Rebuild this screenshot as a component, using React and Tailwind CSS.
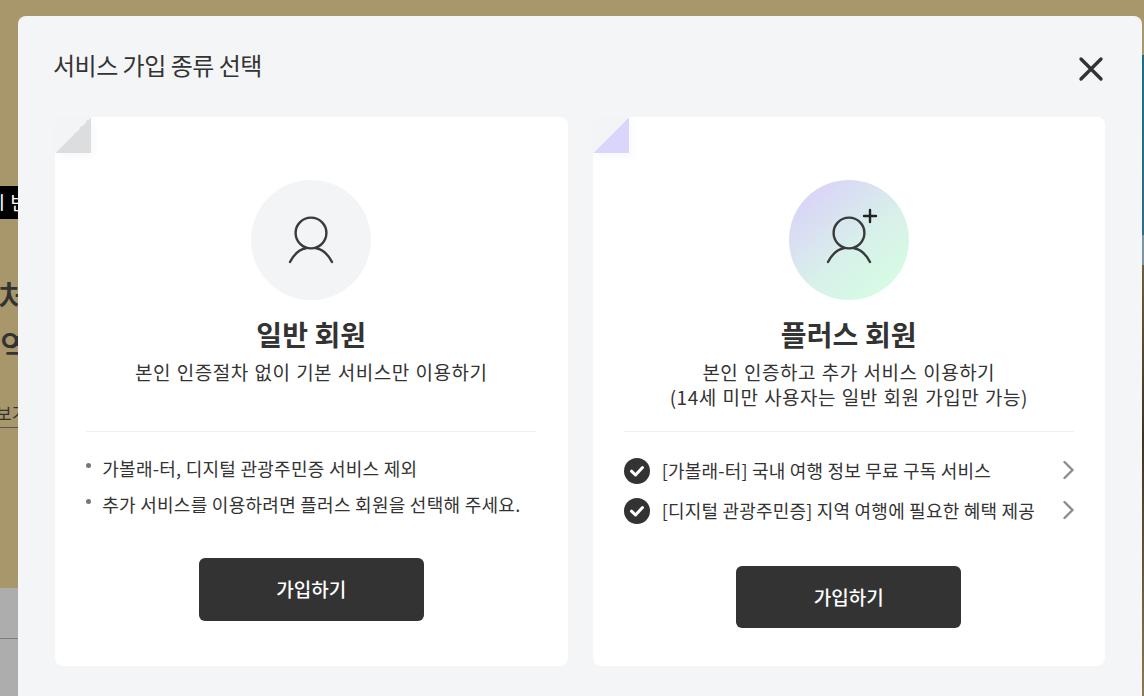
const font = { fontFamily: '"Noto Sans CJK KR", "Noto Sans", sans-serif' };

const UserIcon = ({ plus }) => (
  <svg width="60" height="56" viewBox="0 -8 60 56" fill="none" stroke="#3a3a3a" strokeWidth="2.4" strokeLinecap="round" className="mb-[8px] ml-[12px]">
    <circle cx="24" cy="17" r="15.4" />
    <path d="M3 46C7 38.5 12 33 19 32.2" />
    <path d="M45 46C41 38.5 36 33 29 32.2" />
    {plus && <path d="M45 -6V6M39 0H51" stroke="#222" />}
  </svg>
);

const CheckIcon = () => (
  <svg width="26" height="26" viewBox="0 0 26 26" className="shrink-0">
    <circle cx="13" cy="13" r="13" fill="#333" />
    <path d="M7.5 13.2L11.5 17L18.5 9.5" fill="none" stroke="#fff" strokeWidth="3" strokeLinecap="round" strokeLinejoin="round" />
  </svg>
);

const Chevron = () => (
  <svg width="11" height="20" viewBox="0 0 11 20" fill="none" stroke="#8c8c8c" strokeWidth="2.4" strokeLinecap="round" strokeLinejoin="round" className="mb-[2px] shrink-0">
    <path d="M1.5 2L9.5 10L1.5 18" />
  </svg>
);

const Fold = ({ plus }) => (
  <div
    className={`absolute left-0 top-0 h-[36px] w-[36px] shadow-[3px_4px_8px_rgba(0,0,0,0.03)] ${
      plus
        ? "bg-[linear-gradient(135deg,#f3f4f6_50%,#d9d5fb_50%)]"
        : "bg-[linear-gradient(135deg,#f3f4f6_50%,#dcddde_50%)]"
    }`}
  />
);

const Card = ({ plus, title, desc, children, btnClass }) => (
  <div className="relative flex h-[549px] w-[513px] flex-col items-center rounded-lg bg-white pt-[63px]">
    <Fold plus={plus} />
    <div
      className={`flex h-[120px] w-[120px] items-center justify-center rounded-full ${
        plus ? "bg-[linear-gradient(140deg,#dad2f8_10%,#d8f0ea_55%,#d6fbe4_85%)]" : "bg-[#f3f4f6]"
      }`}
    >
      <UserIcon plus={plus} />
    </div>
    <h2 className="mt-[14px] text-[28px] font-bold leading-[40px] tracking-[0.1px] text-[#333]">{title}</h2>
    <div className="mt-[5px] h-[72px] text-center text-[19px] leading-[25px] tracking-[0.5px] text-[#333] [word-spacing:1px]">
      {desc.map((d) => (
        <p key={d}>{d}</p>
      ))}
    </div>
    <div className="h-px w-[450px] bg-[#f0f0f0]" />
    {children}
    <button className={`flex w-[225px] items-center justify-center rounded-md bg-[#333] text-[19px] font-medium text-white ${btnClass}`}>
      가입하기
    </button>
  </div>
);

export default function App() {
  return (
    <div style={font} className="relative flex h-[696px] w-[1144px] overflow-hidden bg-[#a7976b]">
      {/* page behind the modal */}
      <div className="flex h-full w-[18px] flex-col overflow-hidden">
        <div className="mt-[186px] flex h-[33px] w-[60px] shrink-0 items-center bg-black text-[19px] text-white">
          <span className="ml-[-7px] whitespace-nowrap">ㅣ반</span>
        </div>
        <div className="ml-[-2px] mt-[52px] whitespace-nowrap text-[34px] font-medium leading-[50px] text-[#333]">처</div>
        <div className="whitespace-nowrap text-[34px] font-medium leading-[50px] text-[#333]">역</div>
        <div className="ml-[-4px] mt-[30px] w-[60px] whitespace-nowrap border-b border-[#555] pb-[2px] text-[17px] leading-[24px] text-[#333]">보기</div>
        <div className="mt-auto flex h-[108px] shrink-0 flex-col bg-[#adadad]">
          <div className="mt-[50px] h-px bg-[#7d7d7d]" />
        </div>
      </div>
      <div className="ml-auto flex h-full w-[2px] flex-col">
        <div className="h-[55px] bg-[#a7976b]" />
        <div className="h-[180px] bg-[linear-gradient(180deg,#1e6d8c,#2a6f8a)]" />
        <div className="h-[30px] bg-[#7d95a3]" />
        <div className="flex-1 bg-[linear-gradient(180deg,#6b5f3c,#3b3524_40%,#8a7a50)]" />
      </div>

      {/* modal */}
      <div className="absolute left-[18px] top-[16px] h-[700px] w-[1124px] rounded-lg bg-[#f4f5f7] px-[37px]">
        <div className="flex h-[101px] items-start justify-between">
          <h1 className="ml-[-2px] mt-[31px] text-[24px] font-normal leading-[36px] tracking-[-0.5px] text-[#333]">서비스 가입 종류 선택</h1>
          <button className="mt-[39px]">
            <svg width="28" height="28" viewBox="0 0 28 28" fill="none" stroke="#333" strokeWidth="3.4" strokeLinecap="round">
              <path d="M4 4L24 24M24 4L4 24" />
            </svg>
          </button>
        </div>
        <div className="flex gap-[25px]">
          <Card plus={false} title="일반 회원" desc={["본인 인증절차 없이 기본 서비스만 이용하기"]} btnClass="mt-[40px] h-[63px]">
            <ul className="mt-[22px] flex w-[450px] flex-col gap-[8px] text-[18px] leading-[28px] tracking-[0.27px] text-[#333]">
              {["가볼래-터, 디지털 관광주민증 서비스 제외", "추가 서비스를 이용하려면 플러스 회원을 선택해 주세요."].map((t) => (
                <li key={t} className="flex items-center">
                  <span className="mb-[6px] mr-[11px] h-[5px] w-[5px] rounded-full bg-[#777]" />
                  {t}
                </li>
              ))}
            </ul>
          </Card>
          <Card
            plus
            title="플러스 회원"
            desc={["본인 인증하고 추가 서비스 이용하기", "(14세 미만 사용자는 일반 회원 가입만 가능)"]}
            btnClass="mt-[41px] h-[62px]"
          >
            <ul className="mt-[25px] flex w-[450px] flex-col gap-[12px] text-[18px] leading-[26px] tracking-[0.2px] text-[#333]">
              {["[가볼래-터] 국내 여행 정보 무료 구독 서비스", "[디지털 관광주민증] 지역 여행에 필요한 혜택 제공"].map((t) => (
                <li key={t} className="flex h-[28px] items-center gap-[12px]">
                  <CheckIcon />
                  <span className="flex-1 pb-[2px]">{t}</span>
                  <Chevron />
                </li>
              ))}
            </ul>
          </Card>
        </div>
      </div>
    </div>
  );
}
